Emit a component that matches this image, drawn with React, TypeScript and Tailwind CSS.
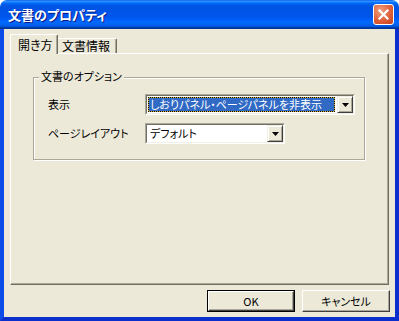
import { ReactNode } from 'react'

function Arrow() {
  return (
    <div className="w-[16px] h-full bg-[#ECE9D8] border border-t-[#F1EFE2] border-l-[#F1EFE2] border-r-[#404040] border-b-[#404040] shadow-[inset_1px_1px_0_#fff,inset_-1px_-1px_0_#ACA899] flex items-center justify-center">
      <svg width="7" height="4" viewBox="0 0 7 4">
        <path d="M0 0H7L3.5 4Z" fill="#000" />
      </svg>
    </div>
  )
}

function Combo({ width, selected, children }: { width: string; selected?: boolean; children: ReactNode }) {
  return (
    <div className={`${width} h-[21px] flex border border-t-[#ACA899] border-l-[#ACA899] border-r-white border-b-white`}>
      <div className="flex-1 flex border border-t-[#716F64] border-l-[#716F64] border-r-[#F1EFE2] border-b-[#F1EFE2] bg-white">
        <div className="flex-1 flex items-center p-[1px] pr-[2px] min-w-0">
          {selected ? (
            <div className="flex-1 h-full bg-[#D8B040]">
              <div className="h-full border border-dotted border-black bg-[#316AC5] bg-clip-padding text-white flex items-center pl-[1px] leading-none whitespace-nowrap overflow-hidden">
                {children}
              </div>
            </div>
          ) : (
            <div className="flex-1 h-full flex items-center pl-[2px] leading-none whitespace-nowrap">{children}</div>
          )}
        </div>
        <Arrow />
      </div>
    </div>
  )
}

function Button({ label, isDefault }: { label: string; isDefault?: boolean }) {
  return (
    <div className={`w-[88px] h-[22px] ${isDefault ? 'border border-black' : ''}`}>
      <div className="h-full flex items-center justify-center bg-[#ECE9D8] border border-t-white border-l-white border-r-[#404040] border-b-[#404040] shadow-[inset_-1px_-1px_0_#ACA899] leading-none">
        {label}
      </div>
    </div>
  )
}

export default function App() {
  return (
    <div className="w-[399px] h-[321px] flex flex-col text-[11px] text-black font-['Noto_Sans_CJK_JP','Noto_Sans',sans-serif] [font-feature-settings:'palt']">
      {/* Title bar */}
      <div className="h-[29px] shrink-0 rounded-t-[7px] flex items-center justify-between pl-[8px] pr-[5px] bg-[linear-gradient(to_bottom,#0058EE_0%,#3A93FF_4%,#288EFF_6%,#127DFF_8%,#036FFC_10%,#0262EE_14%,#0057E5_20%,#0054E3_24%,#0055EB_56%,#005BF5_66%,#026AFE_76%,#0062EF_86%,#0052D6_92%,#0040AB_94%,#003092_100%)]">
        <span className="text-white font-bold text-[13px] leading-none [text-shadow:1px_1px_0_#0A1883]">文書のプロパティ</span>
        <div className="w-[21px] h-[21px] rounded-[3px] border border-white bg-[radial-gradient(circle_at_35%_30%,#F0A080,#E0603A_55%,#C4401C)] flex items-center justify-center">
          <svg width="11" height="11" viewBox="0 0 11 11">
            <path d="M1.5 1.5L9.5 9.5M9.5 1.5L1.5 9.5" stroke="#fff" strokeWidth="2.2" strokeLinecap="square" />
          </svg>
        </div>
      </div>

      {/* Client area */}
      <div className="flex-1 flex flex-col bg-[#ECE9D8] border-l-4 border-r-4 border-b-4 border-l-[#0B4DE6] border-r-[#0A2FCC] border-b-[#0A2FCC] pt-[5px] px-[6px]">
        {/* Tabs */}
        <div className="flex items-end h-[19px] relative z-10">
          <div className="w-[48px] h-[20px] -mb-[1px] bg-[#ECE9D8] border-t border-l border-r border-t-white border-l-white border-r-[#716F64] rounded-tl-[2px] rounded-tr-[2px] shadow-[inset_-1px_0_0_#ACA899] pl-[7px] pt-[3px] leading-[14px] text-[12px]">
            開き方
          </div>
          <div className="w-[59px] h-[15px] border-t border-r border-t-white border-r-[#716F64] rounded-tr-[2px] shadow-[inset_-1px_0_0_#ACA899] pl-[4px] leading-[14px] text-[12px]">
            文書情報
          </div>
        </div>

        {/* Panel */}
        <div className="h-[232px] border border-t-white border-l-white border-r-[#716F64] border-b-[#716F64] shadow-[inset_-1px_-1px_0_#ACA899] pl-[22px] pt-[23px]">
          <div className="relative w-[332px] h-[83px] border border-[#ACA899] shadow-[1px_1px_0_#fff,inset_1px_1px_0_#fff] pt-[16px] flex flex-col gap-[8px]">
            <span className="absolute left-[5px] -top-[7px] bg-[#ECE9D8] px-[2px] leading-none">文書のオプション</span>
            <div className="flex items-center pl-[14px]">
              <span className="w-[97px]">表示</span>
              <Combo width="w-[210px]" selected>
                しおりパネル・ページパネルを非表示
              </Combo>
            </div>
            <div className="flex items-center pl-[14px]">
              <span className="w-[97px]">ページレイアウト</span>
              <Combo width="w-[140px]">デフォルト</Combo>
            </div>
          </div>
        </div>

        {/* Buttons */}
        <div className="flex justify-end gap-[7px] mt-[5px] -mr-[1px]">
          <Button label="OK" isDefault />
          <Button label="キャンセル" />
        </div>
      </div>
    </div>
  )
}
